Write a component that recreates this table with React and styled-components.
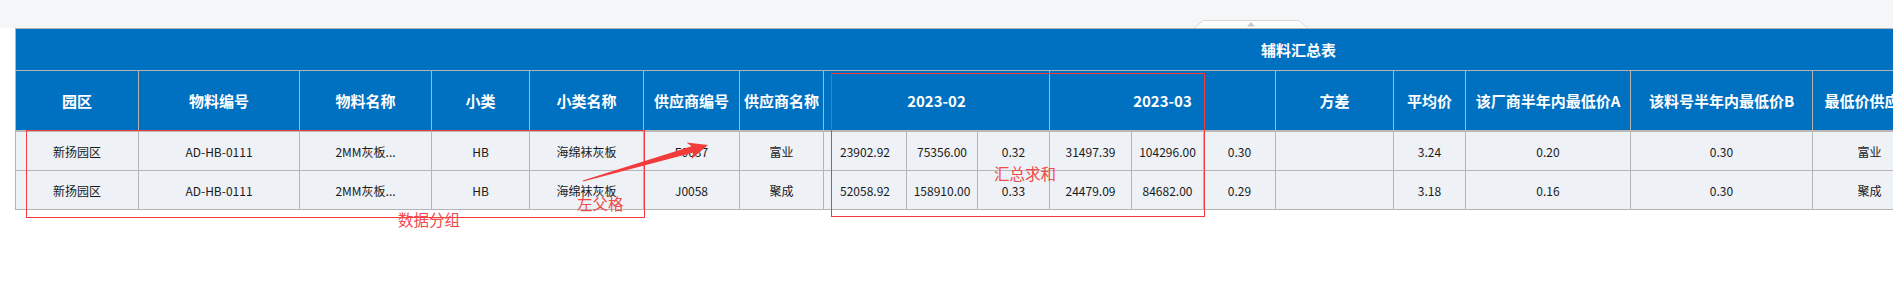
import React from "react";
import styled, { createGlobalStyle } from "styled-components";

const GlobalStyle = createGlobalStyle`
  html, body { margin: 0; padding: 0; background: #ffffff; overflow: hidden; }
  body { font-family: "Noto Sans CJK SC", "Noto Sans", sans-serif; }
`;

const Stage = styled.div`
  position: relative;
  width: 1893px;
  height: 290px;
  overflow: hidden;
`;

const TopBar = styled.div`
  position: relative;
  height: 28px;
  background: #f5f6f8;
`;

const CollapseTab = styled.div`
  position: absolute;
  left: 1194px;
  bottom: 0;
  width: 114px;
  height: 8px;
  display: flex;
  justify-content: center;
  align-items: flex-end;
  svg { display: block; }
`;

const TableArea = styled.div`
  padding-left: 15px;
  width: 2566px;
`;

const Table = styled.table`
  border-collapse: collapse;
  table-layout: fixed;
  width: 2566px;
  font-family: "Noto Sans CJK SC", sans-serif;
  border: 1px solid #b4b4b4;
`;

const TitleCell = styled.th`
  height: 41px;
  padding: 0;
  background: #0071c1;
  color: #ffffff;
  font-size: 15px;
  font-weight: 700;
  text-align: center;
  border-bottom: 1px solid #b4b4b4;
`;

const HeadCell = styled.th`
  height: 59px;
  padding: 0;
  background: #0071c1;
  color: #ffffff;
  font-size: 15px;
  font-weight: 700;
  text-align: center;
  white-space: nowrap;
  overflow: hidden;
  border-left: 1px solid #b4b4b4;
  border-right: 1px solid #b4b4b4;
  border-bottom: 2px solid #b8b8b8;
`;

const DataRow = styled.tr`
  background: #eef1f6;
`;

const DataCell = styled.td`
  height: 38px;
  padding: 0;
  font-size: 12px;
  color: #1a1a1a;
  text-align: center;
  white-space: nowrap;
  overflow: hidden;
  border: 1px solid #b4b4b4;
`;

const Annotation = styled.div`
  position: absolute;
  left: ${(p) => p.$x}px;
  top: ${(p) => p.$y}px;
  width: ${(p) => p.$w}px;
  height: ${(p) => p.$h}px;
  border: 1px solid #f23c3c;
  pointer-events: none;
`;

const AnnoLabel = styled.div`
  position: absolute;
  left: ${(p) => p.$x}px;
  top: ${(p) => p.$y}px;
  font-family: "Noto Sans CJK SC", sans-serif;
  font-size: 15.5px;
  line-height: 1;
  color: #f24a4a;
  white-space: nowrap;
  pointer-events: none;
`;

const ArrowLayer = styled.svg`
  position: absolute;
  left: 0;
  top: 0;
  pointer-events: none;
`;

const widths = [
  123, 161, 132, 98, 114, 96, 84,
  83, 71, 72, 82, 72, 72,
  118, 72, 165, 182, 114,
  110, 110, 110, 110, 215,
];

const headers = [
  { t: "园区" },
  { t: "物料编号" },
  { t: "物料名称" },
  { t: "小类" },
  { t: "小类名称" },
  { t: "供应商编号" },
  { t: "供应商名称" },
  { t: "2023-02", span: 3 },
  { t: "2023-03", span: 3 },
  { t: "方差" },
  { t: "平均价" },
  { t: "该厂商半年内最低价A" },
  { t: "该料号半年内最低价B" },
  { t: "最低价供应商" },
  { t: "最低价" },
  { t: "价差" },
  { t: "差异率" },
  { t: "采购员" },
  { t: "备注" },
];

const rows = [
  ["新扬园区", "AD-HB-0111", "2MM灰板...", "HB", "海绵袜灰板", "F0037", "富业",
    "23902.92", "75356.00", "0.32", "31497.39", "104296.00", "0.30",
    "", "3.24", "0.20", "0.30", "富业", "", "", "", "", ""],
  ["新扬园区", "AD-HB-0111", "2MM灰板...", "HB", "海绵袜灰板", "J0058", "聚成",
    "52058.92", "158910.00", "0.33", "24479.09", "84682.00", "0.29",
    "", "3.18", "0.16", "0.30", "聚成", "", "", "", "", ""],
];

export default function App() {
  return (
    <Stage>
      <GlobalStyle />
      <TopBar>
        <CollapseTab>
          <svg width="114" height="8" viewBox="0 0 114 8">
            <path d="M0.5 8 L9 0.5 L105 0.5 L113.5 8" fill="#ffffff" stroke="#d6d6d6" strokeWidth="1" />
            <path d="M53 6.5 L57 2 L61 6.5 Z" fill="#c8c8c8" />
          </svg>
        </CollapseTab>
      </TopBar>
      <TableArea>
        <Table>
          <colgroup>
            {widths.map((w, i) => (
              <col key={i} style={{ width: w }} />
            ))}
          </colgroup>
          <thead>
            <tr>
              <TitleCell colSpan={widths.length}>辅料汇总表</TitleCell>
            </tr>
            <tr>
              {headers.map((h, i) => (
                <HeadCell key={i} colSpan={h.span || 1}>
                  {h.t}
                </HeadCell>
              ))}
            </tr>
          </thead>
          <tbody>
            {rows.map((r, ri) => (
              <DataRow key={ri}>
                {r.map((c, ci) => (
                  <DataCell key={ci}>{c}</DataCell>
                ))}
              </DataRow>
            ))}
          </tbody>
        </Table>
      </TableArea>

      <Annotation $x={26} $y={130} $w={617} $h={86} />
      <AnnoLabel $x={398} $y={212}>数据分组</AnnoLabel>

      <Annotation $x={831} $y={73} $w={372} $h={142} />
      <AnnoLabel $x={994} $y={166}>汇总求和</AnnoLabel>

      <AnnoLabel $x={577} $y={196}>左父格</AnnoLabel>

      <ArrowLayer width="1893" height="290" viewBox="0 0 1893 290">
        <polygon
          points="583.2,181.6 693.6,152.6 691.5,159 708,145 686.5,142.5 691.6,146.3 582.8,180.4"
          fill="#f23c3c"
        />
      </ArrowLayer>
    </Stage>
  );
}
